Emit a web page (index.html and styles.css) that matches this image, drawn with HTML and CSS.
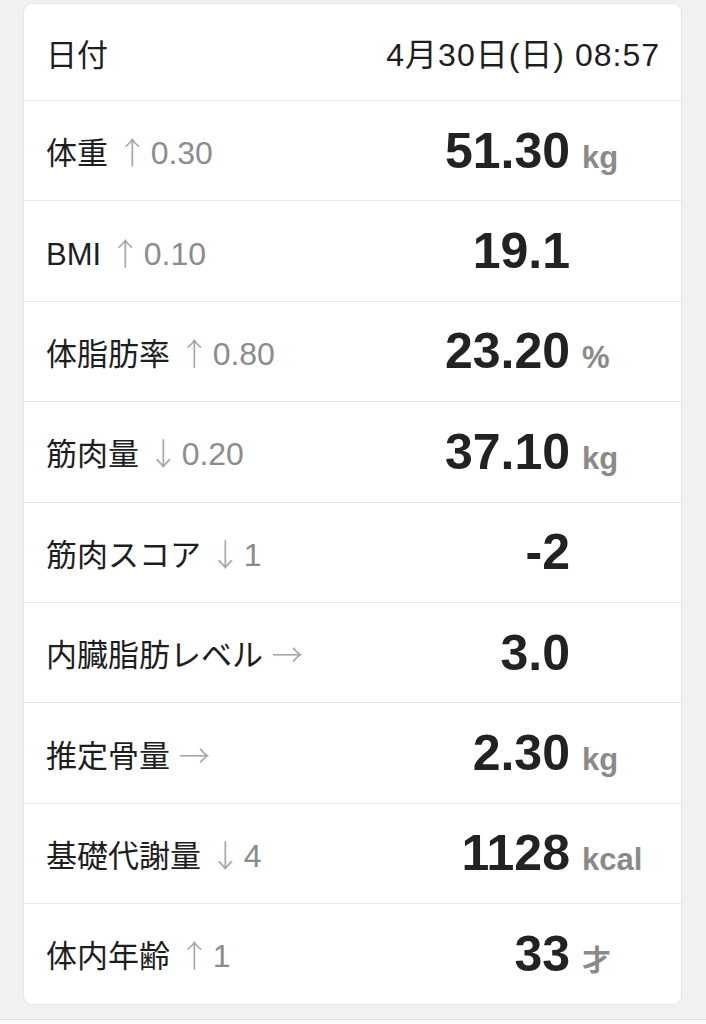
FILE: index.html
```html
<!DOCTYPE html>
<html lang="ja">
<head>
    <meta charset="UTF-8">
    <meta name="viewport" content="width=device-width, initial-scale=1.0">
    <title>計測結果</title>
    <link rel="stylesheet" href="styles.css">
</head>
<body>
    <div class="card">
        <div class="row head">
            <span class="label">日付</span>
            <span class="date">4月30日(日) 08:57</span>
        </div>
        <div class="row">
            <span class="label">体重 <span class="arrow">↑</span><span class="delta">0.30</span></span>
            <span class="val"><span class="num">51.30</span><span class="unit">kg</span></span>
        </div>
        <div class="row">
            <span class="label">BMI <span class="arrow">↑</span><span class="delta">0.10</span></span>
            <span class="val"><span class="num">19.1</span><span class="unit"></span></span>
        </div>
        <div class="row">
            <span class="label">体脂肪率 <span class="arrow">↑</span><span class="delta">0.80</span></span>
            <span class="val"><span class="num">23.20</span><span class="unit">%</span></span>
        </div>
        <div class="row">
            <span class="label">筋肉量 <span class="arrow">↓</span><span class="delta">0.20</span></span>
            <span class="val"><span class="num">37.10</span><span class="unit">kg</span></span>
        </div>
        <div class="row">
            <span class="label">筋肉スコア <span class="arrow">↓</span><span class="delta">1</span></span>
            <span class="val"><span class="num">-2</span><span class="unit"></span></span>
        </div>
        <div class="row">
            <span class="label">内臓脂肪レベル <span class="arrow">→</span></span>
            <span class="val"><span class="num">3.0</span><span class="unit"></span></span>
        </div>
        <div class="row">
            <span class="label">推定骨量 <span class="arrow">→</span></span>
            <span class="val"><span class="num">2.30</span><span class="unit">kg</span></span>
        </div>
        <div class="row">
            <span class="label">基礎代謝量 <span class="arrow">↓</span><span class="delta">4</span></span>
            <span class="val"><span class="num">1128</span><span class="unit">kcal</span></span>
        </div>
        <div class="row">
            <span class="label">体内年齢 <span class="arrow">↑</span><span class="delta">1</span></span>
            <span class="val"><span class="num">33</span><span class="unit age">才</span></span>
        </div>
    </div>
    <div class="footer"></div>
</body>
</html>
```

FILE: styles.css
```css
* {
    margin: 0;
    padding: 0;
    box-sizing: border-box;
}

body {
    font-family: 'Liberation Sans', 'Noto Sans CJK JP', sans-serif;
    background: #f1f1f1;
    color: #1e1e1e;
}

.card {
    margin: 3px 24px 0 23px;
    background: #fff;
    border: 1px solid #e4e4e4;
    border-radius: 9px;
}

.row {
    display: flex;
    align-items: center;
    justify-content: space-between;
    height: 100.4px;
    padding: 0 22px 0 22px;
    border-top: 1px solid #e6e6e6;
}

.row.head {
    height: 96px;
    border-top: none;
}

.label {
    font-size: 31px;
    white-space: nowrap;
}

.date {
    font-size: 32px;
    letter-spacing: 1px;
    margin-right: -1px;
}

.arrow {
    font-family: 'Noto Sans CJK JP', sans-serif;
    font-weight: 300;
    color: #a6a6a6;
    font-size: 31px;
}

.delta {
    color: #8c8c8c;
    font-size: 32px;
    margin-left: 3px;
}

.val {
    display: flex;
    align-items: baseline;
}

.num {
    width: 220px;
    text-align: right;
    font-size: 50px;
    font-weight: bold;
    color: #222;
}

.unit {
    width: 89px;
    padding-left: 12px;
    font-size: 31px;
    font-weight: bold;
    color: #8a8a8a;
}

.unit.age {
    font-size: 29px;
}

.footer {
    margin-top: 14px;
    height: 20px;
    background: #fff;
    border-top: 1px solid #dcdcdc;
}
```
